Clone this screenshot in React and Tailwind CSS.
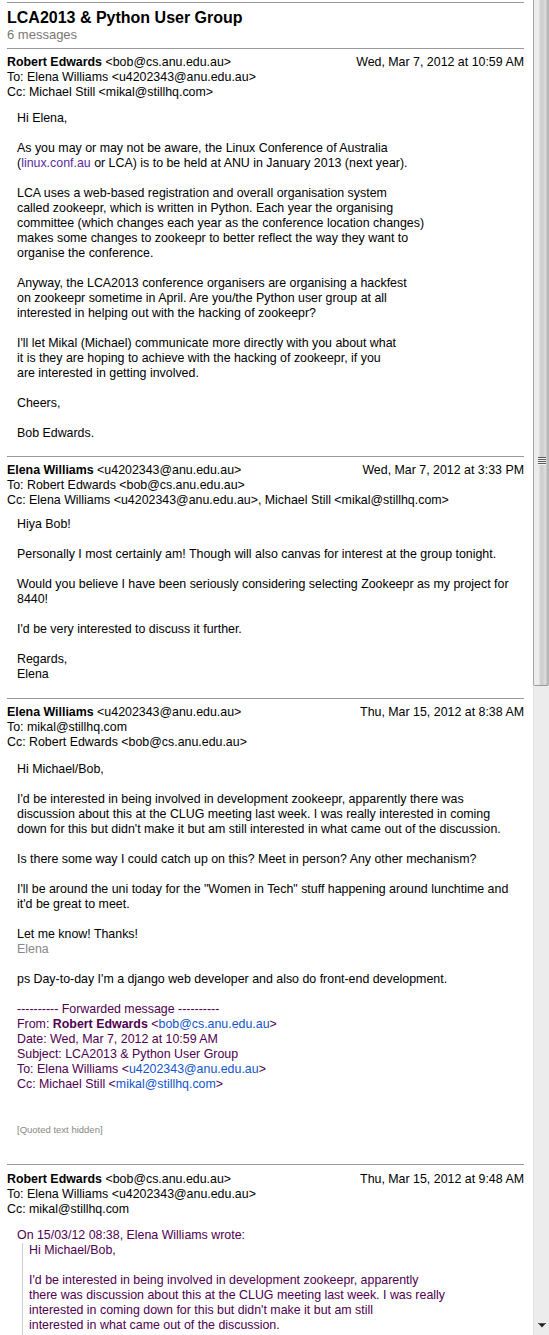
import React from "react";

const Line = ({ children, className = "" }) => (
  <div className={"h-[15px] whitespace-nowrap " + className}>{children}</div>
);
const Blank = () => <div className="h-[15px]" />;

function Header({ name, email, date, to, cc }) {
  return (
    <div>
      <div className="flex h-[15px] justify-between whitespace-nowrap">
        <div>
          <span className="font-bold">{name}</span> &lt;{email}&gt;
        </div>
        <div>{date}</div>
      </div>
      <Line>To: {to}</Line>
      <Line>Cc: {cc}</Line>
    </div>
  );
}

function Grip() {
  return (
    <svg width="8" height="9" viewBox="0 0 8 9">
      {[0, 2, 4, 6].map((y) => (
        <g key={y}>
          <rect x="0" y={y} width="8" height="1" fill="#5a5a5a" />
          <rect x="0" y={y + 1} width="8" height="1" fill="#f4f4f4" />
        </g>
      ))}
    </svg>
  );
}

function DownArrow() {
  return (
    <svg width="8" height="5" viewBox="0 0 8 5">
      <polygon points="0,0 8,0 4,4.5" fill="#222" />
      <rect x="0" y="0" width="8" height="1" fill="#555" />
    </svg>
  );
}

export default function App() {
  const link = "text-[#1155cc]";
  const purple = "text-[#500050]";
  return (
    <div className="flex h-[1335px] w-[549px] overflow-hidden bg-white text-[12.4px] leading-[15px] text-black font-['Liberation_Sans',Arial,sans-serif]">
      <main className="w-[533px] shrink-0 pl-[7px] pr-[9px] pt-[2px]">
        <div className="border-t border-[#999]" />
        <h1 className="mt-[5px] h-[19px] text-[16px] font-bold leading-[19px]">
          LCA2013 &amp; Python User Group
        </h1>
        <div className="h-[15px] text-[13px] text-[#777]">6 messages</div>

        {/* Message 1 */}
        <section className="mt-[6px] border-t border-[#999] pt-[6px] pb-[15px]">
          <Header
            name="Robert Edwards"
            email="bob@cs.anu.edu.au"
            date="Wed, Mar 7, 2012 at 10:59 AM"
            to="Elena Williams <u4202343@anu.edu.au>"
            cc="Michael Still <mikal@stillhq.com>"
          />
          <div className="mt-[11px] pl-[10px]">
            <Line>Hi Elena,</Line>
            <Blank />
            <Line>As you may or may not be aware, the Linux Conference of Australia</Line>
            <Line>
              (<span className="text-[#5c2c9c]">linux.conf.au</span> or LCA) is to be held at ANU in January 2013 (next year).
            </Line>
            <Blank />
            <Line>LCA uses a web-based registration and overall organisation system</Line>
            <Line>called zookeepr, which is written in Python. Each year the organising</Line>
            <Line>committee (which changes each year as the conference location changes)</Line>
            <Line>makes some changes to zookeepr to better reflect the way they want to</Line>
            <Line>organise the conference.</Line>
            <Blank />
            <Line>Anyway, the LCA2013 conference organisers are organising a hackfest</Line>
            <Line>on zookeepr sometime in April. Are you/the Python user group at all</Line>
            <Line>interested in helping out with the hacking of zookeepr?</Line>
            <Blank />
            <Line>I'll let Mikal (Michael) communicate more directly with you about what</Line>
            <Line>it is they are hoping to achieve with the hacking of zookeepr, if you</Line>
            <Line>are interested in getting involved.</Line>
            <Blank />
            <Line>Cheers,</Line>
            <Blank />
            <Line>Bob Edwards.</Line>
          </div>
        </section>

        {/* Message 2 */}
        <section className="border-t border-[#999] pt-[6px] pb-[16px]">
          <Header
            name="Elena Williams"
            email="u4202343@anu.edu.au"
            date="Wed, Mar 7, 2012 at 3:33 PM"
            to="Robert Edwards <bob@cs.anu.edu.au>"
            cc="Elena Williams <u4202343@anu.edu.au>, Michael Still <mikal@stillhq.com>"
          />
          <div className="mt-[9px] pl-[10px]">
            <Line>Hiya Bob!</Line>
            <Blank />
            <Line>Personally I most certainly am! Though will also canvas for interest at the group tonight.</Line>
            <Blank />
            <Line>Would you believe I have been seriously considering selecting Zookeepr as my project for</Line>
            <Line>8440!</Line>
            <Blank />
            <Line>I'd be very interested to discuss it further.</Line>
            <Blank />
            <Line>Regards,</Line>
            <Line>Elena</Line>
          </div>
        </section>

        {/* Message 3 */}
        <section className="border-t border-[#999] pt-[6px] pb-[28px]">
          <Header
            name="Elena Williams"
            email="u4202343@anu.edu.au"
            date="Thu, Mar 15, 2012 at 8:38 AM"
            to="mikal@stillhq.com"
            cc="Robert Edwards <bob@cs.anu.edu.au>"
          />
          <div className="mt-[12px] pl-[10px]">
            <Line>Hi Michael/Bob,</Line>
            <Blank />
            <Line>I'd be interested in being involved in development zookeepr, apparently there was</Line>
            <Line>discussion about this at the CLUG meeting last week. I was really interested in coming</Line>
            <Line>down for this but didn't make it but am still interested in what came out of the discussion.</Line>
            <Blank />
            <Line>Is there some way I could catch up on this? Meet in person? Any other mechanism?</Line>
            <Blank />
            <Line>I'll be around the uni today for the "Women in Tech" stuff happening around lunchtime and</Line>
            <Line>it'd be great to meet.</Line>
            <Blank />
            <Line>Let me know! Thanks!</Line>
            <Line className="text-[#888]">Elena</Line>
            <Blank />
            <Line>ps Day-to-day I'm a django web developer and also do front-end development.</Line>
            <Blank />
            <div className={purple}>
              <Line>---------- Forwarded message ----------</Line>
              <Line>
                From: <span className="font-bold">Robert Edwards</span> &lt;<span className={link}>bob@cs.anu.edu.au</span>&gt;
              </Line>
              <Line>Date: Wed, Mar 7, 2012 at 10:59 AM</Line>
              <Line>Subject: LCA2013 &amp; Python User Group</Line>
              <Line>
                To: Elena Williams &lt;<span className={link}>u4202343@anu.edu.au</span>&gt;
              </Line>
              <Line>
                Cc: Michael Still &lt;<span className={link}>mikal@stillhq.com</span>&gt;
              </Line>
            </div>
            <div className="mt-[32px] h-[12px] text-[9.5px] leading-[12px] text-[#888]">[Quoted text hidden]</div>
          </div>
        </section>

        {/* Message 4 */}
        <section className="border-t border-[#999] pt-[7px]">
          <Header
            name="Robert Edwards"
            email="bob@cs.anu.edu.au"
            date="Thu, Mar 15, 2012 at 9:48 AM"
            to="Elena Williams <u4202343@anu.edu.au>"
            cc="mikal@stillhq.com"
          />
          <div className={"mt-[11px] pl-[10px] " + purple}>
            <Line>On 15/03/12 08:38, Elena Williams wrote:</Line>
            <blockquote className="ml-[5px] border-l border-[#cccccc] pl-[6px]">
              <Line>Hi Michael/Bob,</Line>
              <Blank />
              <Line>I'd be interested in being involved in development zookeepr, apparently</Line>
              <Line>there was discussion about this at the CLUG meeting last week. I was really</Line>
              <Line>interested in coming down for this but didn't make it but am still</Line>
              <Line>interested in what came out of the discussion.</Line>
              <Blank />
              <Blank />
            </blockquote>
          </div>
        </section>
      </main>

      {/* Scrollbar */}
      <div className="flex h-full w-[16px] shrink-0 flex-col">
        <div className="flex h-[686px] shrink-0 flex-col items-center rounded-b-[2px] border-b border-[#9a9a9a] bg-[linear-gradient(to_right,#a3a3a3_0px,#a3a3a3_1px,#ececec_1px,#ececec_6px,#d2d2d2_7px,#cdcdcd_10px,#dadada_11px,#dadada_13px,#b8b8b8_14px,#b8b8b8_16px)] pt-[457px] pl-[1px]">
          <Grip />
        </div>
        <div className="flex flex-1 flex-col items-center justify-end border-l border-[#e2e2e2] bg-[#ececec] pb-[7px]">
          <DownArrow />
        </div>
      </div>
    </div>
  );
}
